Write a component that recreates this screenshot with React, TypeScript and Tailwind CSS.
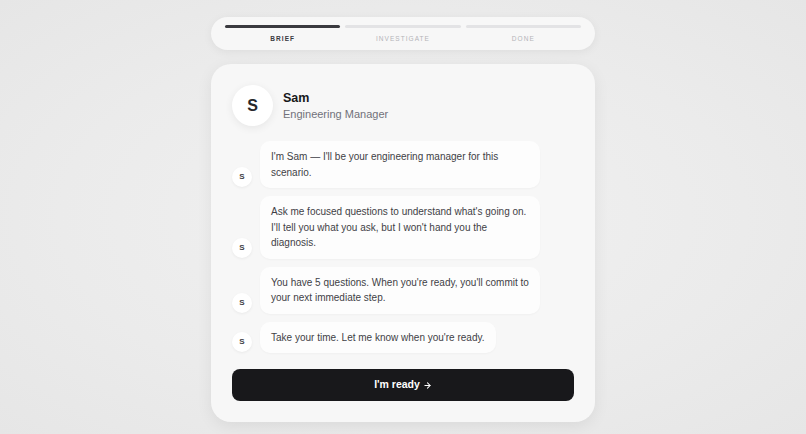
import React from "react";
import { ArrowRight } from "lucide-react";

const steps = [
  { label: "Brief", active: true },
  { label: "Investigate", active: false },
  { label: "Done", active: false },
];

const messages = [
  "I'm Sam — I'll be your engineering manager for this scenario.",
  "Ask me focused questions to understand what's going on. I'll tell you what you ask, but I won't hand you the diagnosis.",
  "You have 5 questions. When you're ready, you'll commit to your next immediate step.",
  "Take your time. Let me know when you're ready.",
];

function Stepper() {
  return (
    <div className="w-[384px] rounded-[17px] bg-[#f7f7f7] px-[14px] pt-[8px] pb-[7px] shadow-[0_2px_10px_rgba(0,0,0,0.06)]">
      <div className="grid grid-cols-3 gap-[5px]">
        {steps.map((s) => (
          <div key={s.label} className="flex flex-col items-center">
            <div
              className={
                s.active
                  ? "h-[3px] w-full rounded-full bg-[#3a3a3f]"
                  : "h-[3px] w-full rounded-full bg-[#e3e3e5]"
              }
            />
            <span
              className={
                s.active
                  ? "mt-[6px] text-[6.5px] leading-[9px] font-bold uppercase tracking-[0.16em] text-[#3a3a3f]"
                  : "mt-[6px] text-[6.5px] leading-[9px] font-medium uppercase tracking-[0.16em] text-[#b4b4b8]"
              }
            >
              {s.label}
            </span>
          </div>
        ))}
      </div>
    </div>
  );
}

function Message({ text }: { text: string }) {
  return (
    <div className="flex items-end gap-[8px]">
      <div className="mb-[1px] flex h-[20px] w-[20px] shrink-0 items-center justify-center rounded-full bg-white text-[8px] font-semibold text-[#3f3f46] shadow-[0_1px_3px_rgba(0,0,0,0.06)]">
        S
      </div>
      <div className="max-w-[280px] rounded-[10px] bg-[#fdfdfd] px-[11px] pt-[8px] pb-[8px] text-[10px] leading-[15.5px] text-[#3f3f46] shadow-[0_1px_2px_rgba(0,0,0,0.03)]">
        {text}
      </div>
    </div>
  );
}

export default function App() {
  return (
    <div
      className="flex h-[434px] w-full flex-col items-center overflow-hidden bg-[radial-gradient(ellipse_at_center,#f1f1f1_0%,#ebebeb_60%,#e6e6e6_100%)] pt-[17px]"
      style={{ fontFamily: "'Liberation Sans', Arial, sans-serif" }}
    >
      <Stepper />

      <div className="mt-[14px] w-[384px] rounded-[20px] bg-[#f7f7f7] px-[21px] pt-[21px] pb-[21px] shadow-[0_4px_16px_rgba(0,0,0,0.07)]">
        <div className="flex items-center gap-[10px]">
          <div className="flex h-[41px] w-[41px] items-center justify-center rounded-full bg-white text-[16px] font-bold text-[#27272a] shadow-[0_2px_8px_rgba(0,0,0,0.07)]">
            S
          </div>
          <div className="flex flex-col">
            <span className="text-[12.5px] font-bold leading-[16px] text-[#18181b]">Sam</span>
            <span className="mt-[1px] text-[11px] leading-[15px] text-[#71717a]">Engineering Manager</span>
          </div>
        </div>

        <div className="mt-[15px] flex flex-col gap-[8px]">
          {messages.map((m) => (
            <Message key={m} text={m} />
          ))}
        </div>

        <button className="mt-[16px] flex h-[32px] w-full items-center justify-center gap-[3px] rounded-[8px] bg-[#18181b] text-[10.5px] font-bold text-white">
          I'm ready
          <ArrowRight size={9} strokeWidth={2.75} />
        </button>
      </div>
    </div>
  );
}
